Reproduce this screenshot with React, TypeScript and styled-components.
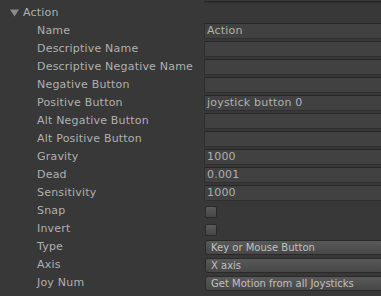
import styled, { createGlobalStyle } from "styled-components";

const GlobalStyle = createGlobalStyle`
  html, body {
    margin: 0;
    padding: 0;
    background: #383838;
    overflow: hidden;
  }
  body {
    font-family: "DejaVu Sans", Verdana, sans-serif;
    font-size: 11px;
    letter-spacing: 0.2px;
    color: #b0b0b0;
  }
`;

type Row =
  | { label: string; kind: "text"; value: string }
  | { label: string; kind: "check" }
  | { label: string; kind: "popup"; value: string };

const rows: Row[] = [
  { label: "Name", kind: "text", value: "Action" },
  { label: "Descriptive Name", kind: "text", value: "" },
  { label: "Descriptive Negative Name", kind: "text", value: "" },
  { label: "Negative Button", kind: "text", value: "" },
  { label: "Positive Button", kind: "text", value: "joystick button 0" },
  { label: "Alt Negative Button", kind: "text", value: "" },
  { label: "Alt Positive Button", kind: "text", value: "" },
  { label: "Gravity", kind: "text", value: "1000" },
  { label: "Dead", kind: "text", value: "0.001" },
  { label: "Sensitivity", kind: "text", value: "1000" },
  { label: "Snap", kind: "check" },
  { label: "Invert", kind: "check" },
  { label: "Type", kind: "popup", value: "Key or Mouse Button" },
  { label: "Axis", kind: "popup", value: "X axis" },
  { label: "Joy Num", kind: "popup", value: "Get Motion from all Joysticks" },
];

function App() {
  return (
    <Inspector>
      <GlobalStyle />
      <TopStub>
        <TextField />
      </TopStub>
      <Foldout>
        <Arrow viewBox="0 0 9 8">
          <path d="M0 0.5 L9 0.5 L4.5 7.5 Z" fill="#8c8c8c" />
        </Arrow>
        <span>Action</span>
      </Foldout>
      {rows.map((row) => (
        <PropertyRow key={row.label}>
          <Label>{row.label}</Label>
          {row.kind === "text" && <TextField>{row.value}</TextField>}
          {row.kind === "check" && <Checkbox />}
          {row.kind === "popup" && <Popup>{row.value}</Popup>}
        </PropertyRow>
      ))}
    </Inspector>
  );
}

const Inspector = styled.div`
  width: 381px;
  height: 296px;
  overflow: hidden;
`;

const TopStub = styled.div`
  height: 3px;
  overflow: hidden;
  display: flex;
  flex-direction: column;
  justify-content: flex-end;
  padding-left: 204px;
`;

const Foldout = styled.div`
  height: 19px;
  display: flex;
  align-items: center;
  gap: 4px;
  padding-left: 10px;
`;

const Arrow = styled.svg`
  width: 9px;
  height: 8px;
`;

const PropertyRow = styled.div`
  height: 18px;
  display: grid;
  grid-template-columns: 167px 1fr;
  padding-left: 37px;
`;

const Label = styled.div`
  line-height: 18px;
  white-space: nowrap;
`;

const TextField = styled.div`
  box-sizing: border-box;
  margin-top: 1px;
  height: 16px;
  width: 190px;
  background: #414141;
  border: 1px solid #2f2f2f;
  border-top-color: #262626;
  border-right: none;
  padding-left: 2px;
  line-height: 14px;
  color: #b0b0b0;
  white-space: nowrap;
`;

const Checkbox = styled.div`
  box-sizing: border-box;
  margin: 4px 0 0 1px;
  width: 12px;
  height: 12px;
  border-radius: 2px;
  border: 1px solid #2a2a2a;
  background: linear-gradient(#5a5a5a, #464646);
`;

const Popup = styled.div`
  box-sizing: border-box;
  margin: 2px 0 0 1px;
  height: 15px;
  width: 190px;
  border-radius: 3px;
  border: 1px solid #2a2a2a;
  background: linear-gradient(#595959, #474747);
  padding-left: 5px;
  font-size: 10px;
  letter-spacing: 0;
  line-height: 13px;
  color: #c0c0c0;
  white-space: nowrap;
`;

export default App;
